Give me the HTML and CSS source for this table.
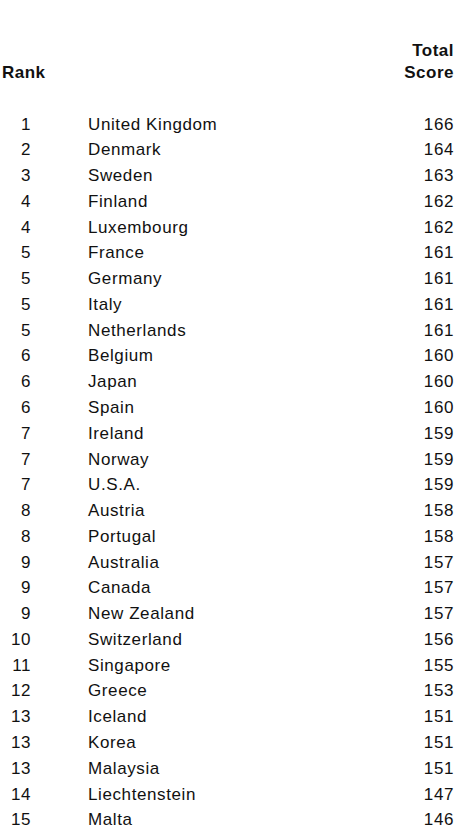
FILE: index.html
```html
<!DOCTYPE html>
<html>
<head>
<meta charset="utf-8">
<link rel="stylesheet" href="styles.css">
</head>
<body>
<div class="table">
  <div class="head">
    <div class="h-rank">Rank</div>
    <div class="h-score">Total<br>Score</div>
  </div>
  <div class="rows">
    <div class="row"><span class="rank">1</span><span class="country">United Kingdom</span><span class="score">166</span></div>
    <div class="row"><span class="rank">2</span><span class="country">Denmark</span><span class="score">164</span></div>
    <div class="row"><span class="rank">3</span><span class="country">Sweden</span><span class="score">163</span></div>
    <div class="row"><span class="rank">4</span><span class="country">Finland</span><span class="score">162</span></div>
    <div class="row"><span class="rank">4</span><span class="country">Luxembourg</span><span class="score">162</span></div>
    <div class="row"><span class="rank">5</span><span class="country">France</span><span class="score">161</span></div>
    <div class="row"><span class="rank">5</span><span class="country">Germany</span><span class="score">161</span></div>
    <div class="row"><span class="rank">5</span><span class="country">Italy</span><span class="score">161</span></div>
    <div class="row"><span class="rank">5</span><span class="country">Netherlands</span><span class="score">161</span></div>
    <div class="row"><span class="rank">6</span><span class="country">Belgium</span><span class="score">160</span></div>
    <div class="row"><span class="rank">6</span><span class="country">Japan</span><span class="score">160</span></div>
    <div class="row"><span class="rank">6</span><span class="country">Spain</span><span class="score">160</span></div>
    <div class="row"><span class="rank">7</span><span class="country">Ireland</span><span class="score">159</span></div>
    <div class="row"><span class="rank">7</span><span class="country">Norway</span><span class="score">159</span></div>
    <div class="row"><span class="rank">7</span><span class="country">U.S.A.</span><span class="score">159</span></div>
    <div class="row"><span class="rank">8</span><span class="country">Austria</span><span class="score">158</span></div>
    <div class="row"><span class="rank">8</span><span class="country">Portugal</span><span class="score">158</span></div>
    <div class="row"><span class="rank">9</span><span class="country">Australia</span><span class="score">157</span></div>
    <div class="row"><span class="rank">9</span><span class="country">Canada</span><span class="score">157</span></div>
    <div class="row"><span class="rank">9</span><span class="country">New Zealand</span><span class="score">157</span></div>
    <div class="row"><span class="rank">10</span><span class="country">Switzerland</span><span class="score">156</span></div>
    <div class="row"><span class="rank">11</span><span class="country">Singapore</span><span class="score">155</span></div>
    <div class="row"><span class="rank">12</span><span class="country">Greece</span><span class="score">153</span></div>
    <div class="row"><span class="rank">13</span><span class="country">Iceland</span><span class="score">151</span></div>
    <div class="row"><span class="rank">13</span><span class="country">Korea</span><span class="score">151</span></div>
    <div class="row"><span class="rank">13</span><span class="country">Malaysia</span><span class="score">151</span></div>
    <div class="row"><span class="rank">14</span><span class="country">Liechtenstein</span><span class="score">147</span></div>
    <div class="row"><span class="rank">15</span><span class="country">Malta</span><span class="score">146</span></div>
  </div>
</div>
</body>
</html>
```

FILE: styles.css
```css
html, body {
  margin: 0;
  padding: 0;
  background: #ffffff;
}
body {
  font-family: "Liberation Sans", Arial, sans-serif;
  color: #111111;
  font-size: 17px;
  letter-spacing: 0.5px;
}
.table {
  width: 454px;
  padding-left: 2px;
  box-sizing: border-box;
}
.head {
  display: flex;
  justify-content: space-between;
  align-items: flex-end;
  padding-top: 40px;
  font-weight: bold;
  line-height: 21.5px;
}
.h-score {
  text-align: right;
}
.rows {
  margin-top: 28.6px;
  letter-spacing: 0.6px;
}
.row {
  display: grid;
  grid-template-columns: 29px 1fr auto;
  column-gap: 57px;
  line-height: 25.77px;
  height: 25.77px;
}
.rank {
  text-align: right;
}
.score {
  text-align: right;
}
```
